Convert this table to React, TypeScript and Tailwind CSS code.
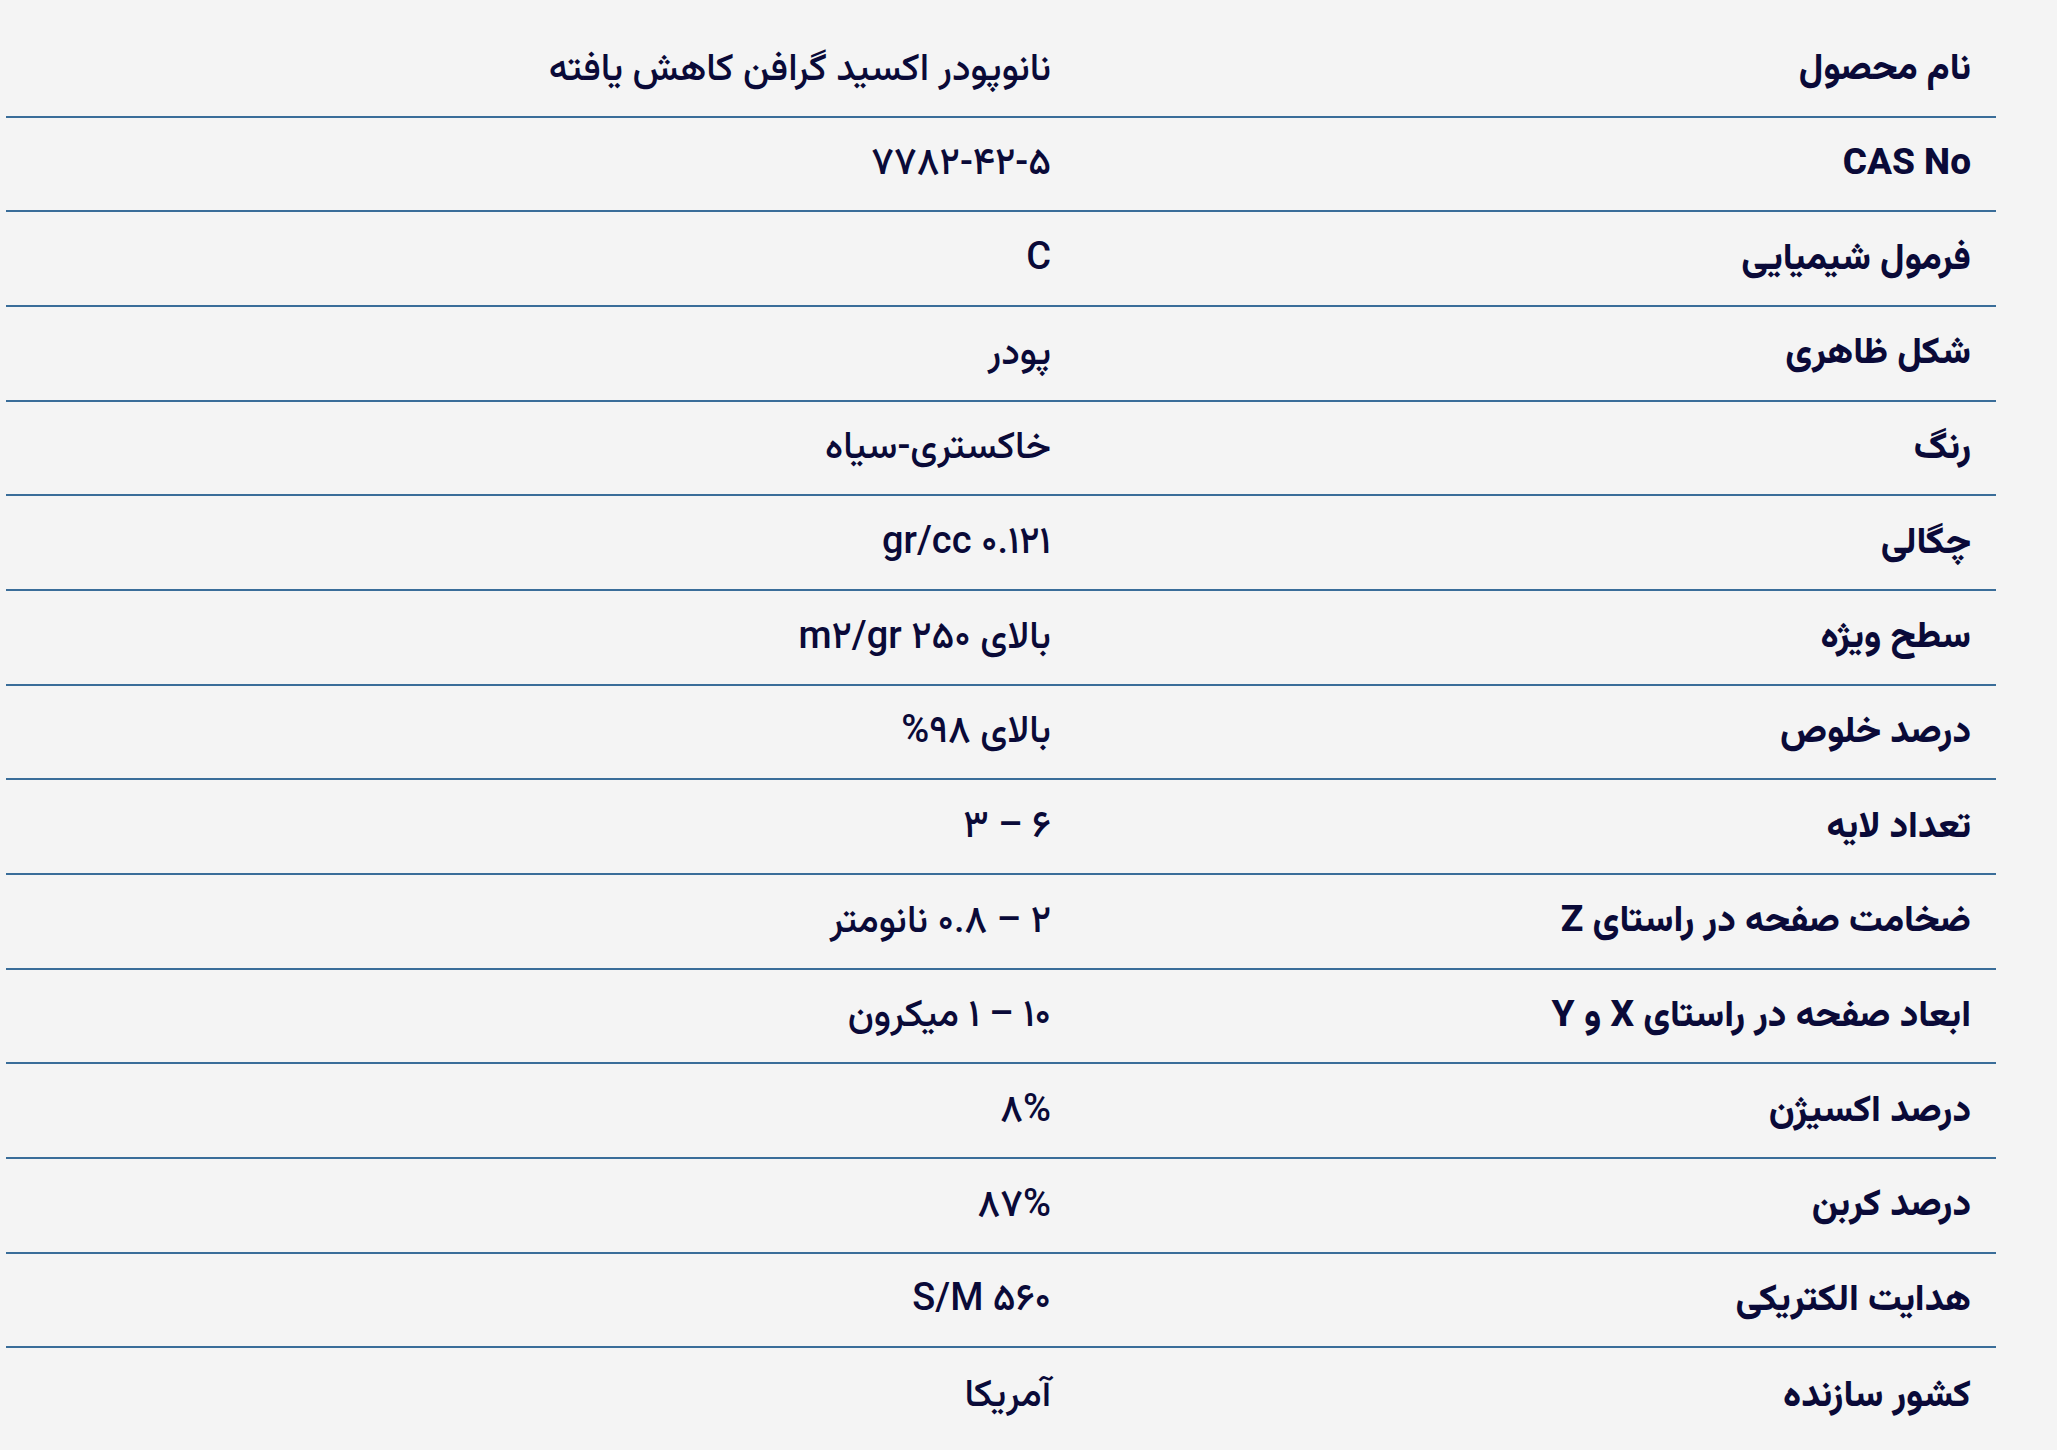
const rows: [string, string][] = [
  ['نام محصول', 'نانوپودر اکسید گرافن کاهش یافته'],
  ['CAS No', '۷۷۸۲-۴۲-۵'],
  ['فرمول شیمیایی', 'C'],
  ['شکل ظاهری', 'پودر'],
  ['رنگ', 'خاکستری-سیاه'],
  ['چگالی', '۰.۱۲۱ gr/cc'],
  ['سطح ویژه', 'بالای ۲۵۰ m۲/gr'],
  ['درصد خلوص', 'بالای ۹۸%'],
  ['تعداد لایه', '۶ – ۳'],
  ['ضخامت صفحه در راستای Z', '۲ – ۰.۸ نانومتر'],
  ['ابعاد صفحه در راستای X و Y', '۱۰ – ۱ میکرون'],
  ['درصد اکسیژن', '۸%'],
  ['درصد کربن', '۸۷%'],
  ['هدایت الکتریکی', '۵۶۰ S/M'],
  ['کشور سازنده', 'آمریکا'],
];

const SpecRow = ({ label, value, last }: { label: string; value: string; last: boolean }) => {
  return (
    <div
      className={`grid h-[94.67px] grid-cols-[920px_1fr] items-center pb-[5px] ${
        last ? '' : 'border-b-2 border-[#3a6d99]'
      }`}
    >
      <div className="pr-[25px] text-[37px] font-extrabold leading-none text-[#0a0a38]">{label}</div>
      <div className="pr-[25px] text-[38px] font-medium leading-none text-[#0a0a38]">{value}</div>
    </div>
  );
};

export default function App() {
  return (
    <div className="min-h-screen bg-[#f4f4f4] pt-[23px] font-['Roboto','Vazirmatn','Noto_Sans_Arabic','DejaVu_Sans',sans-serif]">
      <div dir="rtl" className="ml-[6px] w-[1990px]">
        {rows.map(([label, value], i) => (
          <SpecRow key={label} label={label} value={value} last={i === rows.length - 1} />
        ))}
      </div>
    </div>
  );
}
